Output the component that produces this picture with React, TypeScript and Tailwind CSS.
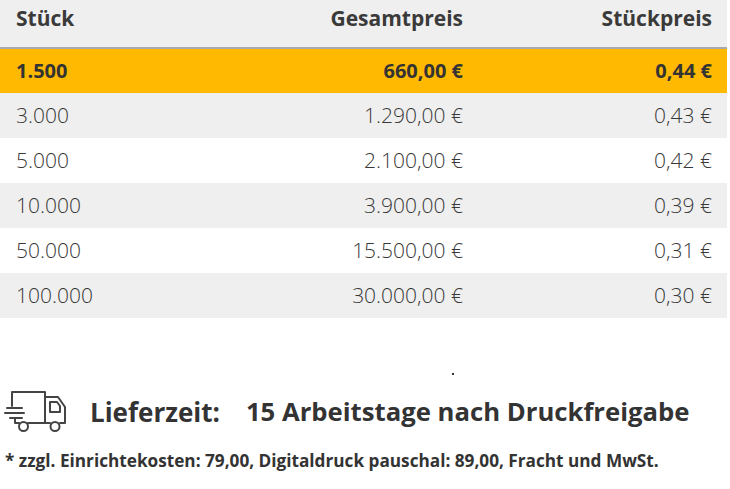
import React from "react";

const rows = [
  { q: "3.000", t: "1.290,00 €", u: "0,43 €" },
  { q: "5.000", t: "2.100,00 €", u: "0,42 €" },
  { q: "10.000", t: "3.900,00 €", u: "0,39 €" },
  { q: "50.000", t: "15.500,00 €", u: "0,31 €" },
  { q: "100.000", t: "30.000,00 €", u: "0,30 €" },
];

function Truck() {
  return (
    <svg width="64" height="46" viewBox="0 0 64 46" fill="none" stroke="#444" strokeWidth="2" strokeLinecap="round" strokeLinejoin="round">
      <path d="M9 17 V3 H42 V34" />
      <path d="M42 8 H55 L62 18 V34 H57" />
      <path d="M47 13 H54 L57 17 V23 H47 Z" />
      <path d="M47 34 H25" />
      <path d="M16 34 H12 V29" />
      <path d="M4 19 H19" />
      <path d="M2 24 H21" />
      <path d="M7 29 H19" />
      <circle cx="20.5" cy="37.5" r="4.5" fill="white" />
      <circle cx="52" cy="37.5" r="4.5" fill="white" />
    </svg>
  );
}

export default function App() {
  return (
    <div className="w-[730px] h-[489px] bg-white text-[#333] overflow-hidden" style={{ fontFamily: '"Open Sans", "Noto Sans", sans-serif' }}>
      <div className="w-[727px]">
        <div className="grid grid-cols-[230px_248px_249px] h-[49px] bg-[#efefef] border-b-2 border-[#a7abb0] font-bold text-[21px] leading-[30px] text-[#3a3a3a]">
          <div className="pl-4 pt-[3px]">Stück</div>
          <div className="pr-[15px] pt-[3px] text-right">Gesamtpreis</div>
          <div className="pr-[15px] pt-[3px] text-right">Stückpreis</div>
        </div>
        <div className="grid grid-cols-[230px_248px_249px] h-[44px] items-center bg-[#ffb900] font-bold text-[20px] text-[#333]">
          <div className="pl-4">1.500</div>
          <div className="pr-[15px] text-right">660,00 €</div>
          <div className="pr-[15px] text-right">0,44 €</div>
        </div>
        {rows.map((r, i) => (
          <div
            key={r.q}
            className={
              "grid grid-cols-[230px_248px_249px] h-[45px] items-center font-light text-[21px] text-[#383838] " +
              (i % 2 === 0 ? "bg-[#efefef]" : "bg-white")
            }
          >
            <div className="pl-4">{r.q}</div>
            <div className="pr-[15px] text-right">{r.t}</div>
            <div className="pr-[15px] text-right">{r.u}</div>
          </div>
        ))}
      </div>
      <div className="h-[57px] flex items-end">
        <div className="ml-[452px] w-[2px] h-[2px] bg-[#333]" />
      </div>
      <div className="flex items-center h-[48px] mt-[13px]">
        <div className="ml-[3px]">
          <Truck />
        </div>
        <div className="ml-[23px] font-bold text-[26px] text-[#333]">Lieferzeit:</div>
        <div className="ml-[26px] font-bold text-[25.7px] text-[#333]">15 Arbeitstage nach Druckfreigabe</div>
      </div>
      <div className="pl-[5px] mt-[13px] font-bold text-[17.2px] leading-[23px] text-[#333]">
        * zzgl. Einrichtekosten: 79,00, Digitaldruck pauschal: 89,00, Fracht und MwSt.
      </div>
    </div>
  );
}
